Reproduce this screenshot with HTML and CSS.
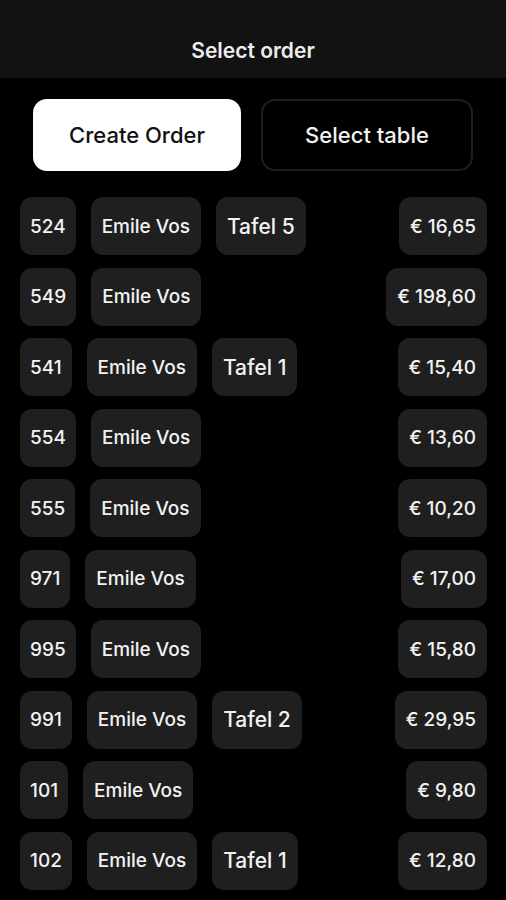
FILE: index.html
```html
<!DOCTYPE html>
<html lang="nl">
<head>
    <meta charset="UTF-8">
    <meta name="viewport" content="width=device-width, initial-scale=1.0">
    <title>Select order</title>
    <link rel="stylesheet" href="styles.css">
</head>
<body>
    <header class="top-bar">
        <h1>Select order</h1>
    </header>

    <div class="actions">
        <button class="btn btn-light">Create Order</button>
        <button class="btn btn-dark">Select table</button>
    </div>

    <div class="order-list">
        <div class="order-row">
            <span class="chip num">524</span>
            <span class="chip name">Emile Vos</span>
            <span class="chip table">Tafel 5</span>
            <span class="chip price">€ 16,65</span>
        </div>
        <div class="order-row">
            <span class="chip num">549</span>
            <span class="chip name">Emile Vos</span>
            <span class="chip price">€ 198,60</span>
        </div>
        <div class="order-row">
            <span class="chip num">541</span>
            <span class="chip name">Emile Vos</span>
            <span class="chip table">Tafel 1</span>
            <span class="chip price">€ 15,40</span>
        </div>
        <div class="order-row">
            <span class="chip num">554</span>
            <span class="chip name">Emile Vos</span>
            <span class="chip price">€ 13,60</span>
        </div>
        <div class="order-row">
            <span class="chip num">555</span>
            <span class="chip name">Emile Vos</span>
            <span class="chip price">€ 10,20</span>
        </div>
        <div class="order-row">
            <span class="chip num">971</span>
            <span class="chip name">Emile Vos</span>
            <span class="chip price">€ 17,00</span>
        </div>
        <div class="order-row">
            <span class="chip num">995</span>
            <span class="chip name">Emile Vos</span>
            <span class="chip price">€ 15,80</span>
        </div>
        <div class="order-row">
            <span class="chip num">991</span>
            <span class="chip name">Emile Vos</span>
            <span class="chip table">Tafel 2</span>
            <span class="chip price">€ 29,95</span>
        </div>
        <div class="order-row">
            <span class="chip num">101</span>
            <span class="chip name">Emile Vos</span>
            <span class="chip price">€ 9,80</span>
        </div>
        <div class="order-row">
            <span class="chip num">102</span>
            <span class="chip name">Emile Vos</span>
            <span class="chip table">Tafel 1</span>
            <span class="chip price">€ 12,80</span>
        </div>
    </div>
</body>
</html>
```

FILE: styles.css
```css
body {
    margin: 0;
    background: #000;
    color: #f2f2f2;
    font-family: Inter, "Noto Sans", sans-serif;
    height: 900px;
    overflow: hidden;
}
.top-bar {
    height: 78px;
    box-sizing: border-box;
    padding-top: 22px;
    background: #121212;
    display: flex;
    align-items: center;
    justify-content: center;
}
.top-bar h1 {
    margin: 0;
    font-size: 21px;
    font-weight: 600;
    color: #ededed;
}
.actions {
    display: flex;
    gap: 20px;
    padding: 21px 33px 0;
}
.btn {
    flex: 1;
    height: 72px;
    border-radius: 14px;
    font-family: inherit;
    font-size: 22px;
    font-weight: 500;
    cursor: pointer;
}
.btn-light {
    background: #fff;
    color: #111;
    border: none;
}
.btn-dark {
    background: #000;
    color: #f2f2f2;
    border: 2px solid #1e1e1e;
}
.order-list {
    display: flex;
    flex-direction: column;
    gap: 12.5px;
    padding: 26px 19px 0 20px;
}
.order-row {
    display: flex;
    align-items: center;
    gap: 15px;
}
.chip {
    height: 58px;
    display: flex;
    align-items: center;
    padding: 0 10px;
    background: #1f1f1f;
    border-radius: 12px;
    font-size: 19px;
    font-weight: 500;
}
.name {
    padding: 0 11px;
}
.table {
    font-size: 21px;
    padding: 0 11px;
}
.price {
    margin-left: auto;
    padding: 0 11px;
}
```
